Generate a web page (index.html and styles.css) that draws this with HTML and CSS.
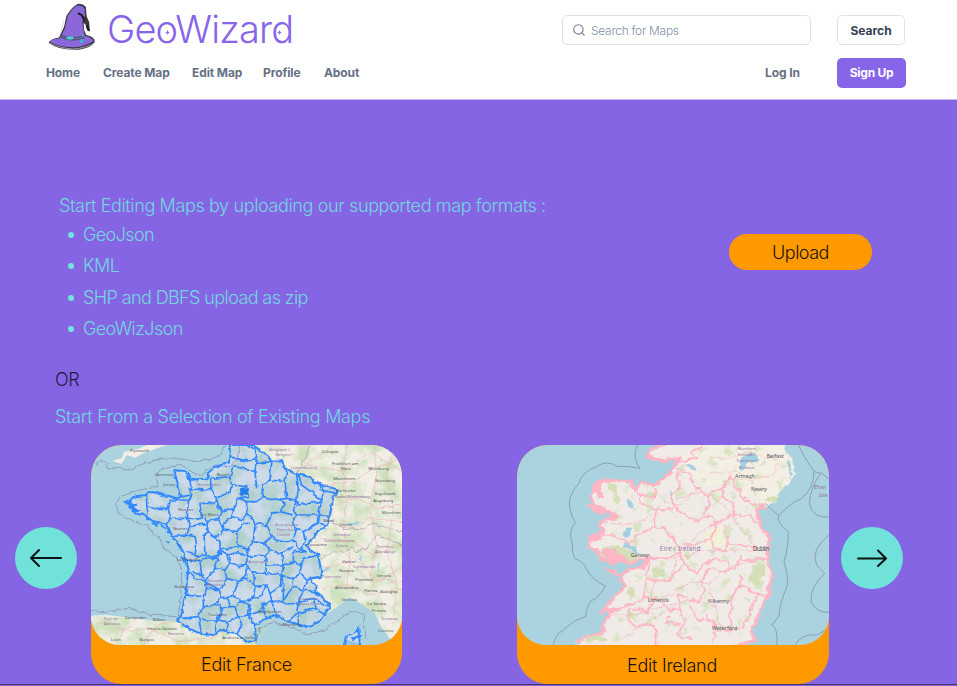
FILE: index.html
```html
<!DOCTYPE html>
<html lang="en">
<head>
<meta charset="utf-8">
<title>GeoWizard</title>
<link rel="stylesheet" href="styles.css">
</head>
<body>
<header class="header">
  <div class="top-row">
    <a class="brand">
      <svg class="hat" viewBox="0 0 150 145">
        <path d="M5 121Q4 110 36 104L51 72 58 40Q76 9 92 3Q106 0 117 12L119 40 127 58 129 86 121 82 116 66 110 60 112 83 118 97Q143 102 144 117Q133 136 95 141Q35 144 5 121Z" fill="#3a3642"/>
        <path d="M8 117Q12 108 38 107L53 78 62 40Q77 13 91 8Q104 5 113 16L114 38 106 57 110 82 113 99Q137 105 140 115Q120 130 84 134Q36 134 8 117Z" fill="#8b67d9"/>
        <path d="M55 41Q73 13 89 5M51 53L37 98M9 122Q40 137 79 139Q119 136 145 120" fill="none" stroke="#cfcdd6" stroke-width="2"/>
        <path d="M41 98Q74 111 111 99M41 103Q76 118 112 105" fill="none" stroke="#4d5671" stroke-width="4"/>
        <path d="M93 31L104 36 113 53M119 68L126 84" fill="none" stroke="#1d1922" stroke-width="6"/>
        <ellipse cx="69" cy="106" rx="11" ry="4.5" fill="#4adbd8"/><circle cx="104" cy="115" r="6" fill="#35bfc8"/><circle cx="107" cy="98" r="3.5" fill="#35bfc8"/>
      </svg>
      <span class="wordmark">GeoWizard</span>
      <svg class="spark spark-o" viewBox="0 0 6 6"><path d="M3 0L4 2 6 3 4 4 3 6 2 4 0 3 2 2Z"/></svg>
      <svg class="spark spark-d" viewBox="0 0 6 6"><path d="M3 0L4 2 6 3 4 4 3 6 2 4 0 3 2 2Z"/></svg>
    </a>
    <div class="search-field">
      <svg class="search-icon" viewBox="0 0 12 12"><circle cx="5.4" cy="5.4" r="4.7"/><path d="M8.8 8.8L11.5 11.5"/></svg>
      <span class="placeholder">Search for Maps</span>
    </div>
    <button class="button search-button">Search</button>
  </div>
  <nav class="nav-row">
    <a class="n-home">Home</a><a class="n-create">Create Map</a><a class="n-edit">Edit Map</a><a class="n-profile">Profile</a><a class="n-about">About</a>
    <a class="login">Log In</a>
    <button class="button signup">Sign Up</button>
  </nav>
</header>
<main class="main">
  <section class="upload-section">
    <div class="formats">
      <p class="intro">Start Editing Maps by uploading our supported map formats :</p>
      <ul>
        <li>GeoJson</li>
        <li>KML</li>
        <li>SHP and DBFS upload as zip</li>
        <li>GeoWizJson</li>
      </ul>
    </div>
    <button class="upload">Upload</button>
  </section>
  <p class="or">OR</p>
  <p class="existing">Start From a Selection of Existing Maps</p>
  <section class="carousel">
    <button class="arrow" aria-label="Previous"><svg viewBox="0 0 34 20"><path d="M32 10H3M10 2L2 10L10 18"/></svg></button>
    <article class="card france">
      <svg class="map" viewBox="33 30 933 600" preserveAspectRatio="none">
        <defs>
          <filter id="rough" x="-5%" y="-5%" width="110%" height="110%"><feTurbulence type="fractalNoise" baseFrequency=".055" numOctaves="2" seed="4"/><feDisplacementMap in="SourceGraphic" scale="13" xChannelSelector="R" yChannelSelector="G"/></filter>
          <filter id="terrain" x="0" y="0" width="100%" height="100%" color-interpolation-filters="sRGB"><feTurbulence type="fractalNoise" baseFrequency=".02" numOctaves="4" seed="8"/><feColorMatrix values="0 0 0 0 .78  0 0 0 0 .87  0 0 0 0 .71  3 0 0 0 -1.15"/><feComposite in2="SourceGraphic" operator="in"/></filter>
        </defs>
        <path class="sea" d="M33 30H966V630H33Z"/>
        <path class="land" d="M450 30H966V555L960 625L928 610L900 570L885 535L850 510L810 487L765 520L735 540L720 562L680 575L640 565L585 542L550 552L525 575L528 630H70L33 590V542L80 540L150 548L230 558L290 557L303 545L318 470L325 400L318 375L310 350L275 300L262 270L225 262L190 240L165 235L150 212L135 200L170 183L198 180L205 172L245 180L270 183L290 190L303 185L292 140L282 106L318 108L330 135L385 130L383 115L400 100L447 80Z"/>
        <path class="land" d="M97 78L125 70L133 50L180 40L200 30H260L235 38L205 50L190 55L165 68L140 60L125 86ZM800 615L805 600L830 588L838 625Z"/>
        <path class="relief" filter="url(#terrain)" d="M450 30H966V555L928 610L885 535L810 487L735 540L680 575L585 542L528 630H70L33 590V542L290 557L318 470L325 400L262 270L190 240L135 200L205 172L303 185L282 106L330 135L385 130L447 80Z"/>
        <g filter="url(#rough)">
          <path class="road" d="M33 570L90 560 140 590 210 580 300 620 420 605M100 630L130 590 170 550M190 630L230 570 280 560M650 110L720 60 760 30M610 40L690 90 790 110 870 50 966 110M730 150L820 140 880 100 966 70M760 210L830 190 890 220 966 210M755 265L820 280 870 250 966 260M720 310L820 320 880 360 966 330M725 400L810 380 860 430 966 440M730 460L800 450 870 480 966 460M800 30L790 120 800 200 790 280 810 360 800 460M880 30L890 120 870 220 890 330 870 420 920 540M940 30L920 120 940 230 920 350 950 440 940 570M760 330L800 360 850 390 890 440 966 400"/>
          <path class="country" d="M690 30L680 60 660 100 650 118M765 160L745 250 790 280 850 285 875 265 966 290M725 370L760 350 790 355 815 335 830 350 860 340 890 300 966 330"/>
          <path class="lake" d="M722 408L745 395 750 402 730 412ZM800 265L840 258 838 267 810 272ZM892 390L898 378 900 410 894 412ZM836 372L842 360 842 378ZM730 290L745 275 742 288Z"/>
          <path class="maritime" d="M480 30L470 75 450 95 405 90 360 118 335 115 320 95 290 90 240 105 230 130 235 155 180 165 120 185 110 205 115 235 165 260 205 270 220 298 240 310 250 340 290 365 305 405 303 470 295 540M33 527L80 530 145 520 210 540 292 545M50 95C50 75 75 70 85 100C110 90 150 120 170 95C200 80 250 65 290 70L350 80 420 65 435 30M527 625L540 580 580 560 640 580 680 600 730 585 770 560 810 530 855 535 850 570 860 610"/>
          <path class="departments" d="M450 30L447 80 400 100 383 115 385 130 330 135 318 108 282 106 292 140 303 185 290 190 270 183 245 180 225 172 205 172 198 180 170 183 135 200 150 212 165 235 190 240 225 262 262 270 275 300 310 350 318 375 325 400 318 470 303 545 290 557 325 580 365 597 405 600 420 585 470 595 500 622 528 615 525 570 560 550 585 540 625 560 680 575 720 560 735 540 750 510 730 490 705 470 712 455 690 430 725 425 722 400 715 360 690 345 680 330 700 310 712 290 740 270 750 240 760 190 773 163 740 155 700 140 690 125 650 118 610 95 607 75 580 80 550 55 520 30ZM795 630L800 605 830 588 835 578 840 630M815 615L845 600"/>
          <path class="borders" d="M200 180V210L220 220H265L272 195M272 195H330L335 180 303 185M330 135L335 180M325 162L395 165M395 130V165L410 190 405 205M335 180L325 200 322 250M322 250L365 250 360 205 405 205M200 210L205 240 M265 220L270 250 262 270M270 250L322 250 330 275 320 300 280 305M320 300L345 305 350 330 345 360 318 350M330 275L380 265 375 250M380 265L385 290 372 300 375 360 345 365M385 290L400 305 425 300 430 285 415 250 380 260M375 360L410 367 420 345V320L400 305M318 375L360 380 365 420 335 410M360 380L375 370H415L405 400 380 435 365 420M325 410L345 430 375 435 380 460 370 485 315 480M380 460L420 465V490L400 510 370 515 370 485M305 550L355 545 370 515M355 545L365 597M365 555L410 555 425 535 420 510 400 510M410 555L405 600M395 130L450 125 458 100M447 65L510 80 530 65M458 95L515 105 525 110M450 125L455 150 500 155 505 185 470 190 462 220 430 230 415 215 410 190 450 170 455 150M430 230L415 250M462 220L455 245 430 265 430 285M455 245L490 255 500 235M430 285L470 290 475 335 420 345M470 290L490 265 510 265M475 335L510 345M410 367L425 350 445 360 450 385 435 405 405 400M445 360L475 350 500 365 502 390 475 395 450 385M435 405L440 430 420 465 375 440M440 430L475 440 500 420 502 390M475 440L460 480 440 490 420 490M440 490L450 515 420 525M460 480L485 500 465 515 450 515M465 515L475 545 440 560 410 555M475 545L505 540 525 570M440 560L445 595M475 545L485 570 470 595M485 500L510 510 505 540M520 30L530 60 525 110 530 160M530 85L575 80 570 135 545 150 550 185 530 200M570 135L615 140 620 105 607 80M615 140L620 190 650 195 655 160 650 118M655 118L665 150 700 175 725 200 730 165 720 145M720 165L770 175M620 190L600 195 575 190 550 185M650 195L655 210 720 200 M725 200L715 240 650 240 640 225 650 195M715 240L745 245M715 240L712 265 670 290 650 280 640 260 650 240M712 265L745 270M670 290L675 315 665 345M650 280L640 315 655 340 680 350M575 235L600 230 615 205 600 190M530 200L500 200V235L525 265 560 270 575 235M525 265L520 320 555 325 575 300 560 270M600 230L640 240M575 300L590 320 640 315M555 325L570 345 605 355 640 335M520 320L500 345 500 365 555 360 570 345M500 395L520 410 555 415 560 390 555 360M560 390L610 390 605 355M610 390L640 380 640 350 680 350M640 380L665 390 670 370 715 360M665 390L660 415 680 435 725 425M610 390L605 420 640 430 660 415M555 415L605 420 600 455 570 475 560 450 525 455 520 410M525 455L500 430 475 440M525 455L520 490 485 500M560 450L545 480 520 490M570 475L575 500 545 510 540 530 505 540M600 455L610 420 610 500 575 500M640 430L640 455 620 480 610 500M640 455L670 465 705 470M670 465L655 500 625 510 610 500M575 500L590 540M655 500L650 535 625 560M655 500L700 490 705 520 650 535M705 520L735 540M655 535L655 565 680 575M704 490L730 510 750 510M545 510L560 550M680 435L670 465M480 190L500 200M500 30L525 50"/>
          <path class="islands" d="M140 205l14-8-3 12 20-3-14 10 18 10-18 2zM195 248l12 7M215 264l18 7M240 272l20 10M263 290l8 3M260 320l8 3M302 365l8 8 6 18"/>
          <path class="paris" d="M482 162L498 159 502 177 484 180Z"/>
        </g>
        <g class="labels">
          <text x="150" y="52">Plymouth</text><text x="224" y="122">Guernsey</text><text x="250" y="154">Jersey</text><text x="410" y="123">Rouen</text><text x="295" y="229">Rennes</text><text x="365" y="244">Le Mans</text><text x="279" y="284">Nantes</text><text x="290" y="377">La Rochelle</text><text x="283" y="460">Bordeaux</text><text x="385" y="544">Toulouse</text><text x="135" y="553">Santander</text><text x="218" y="558">Bilbao</text><text x="202" y="584">Vitoria-Gasteiz</text><text x="93" y="618">León</text><text x="178" y="618">Burgos</text><text x="427" y="613">Andorra la Vella</text><text x="725" y="54">Cologne</text><text x="756" y="90">Frankfurt am</text><text x="782" y="106">Main</text><text x="865" y="104">Würzburg</text><text x="760" y="134">Mannheim</text><text x="885" y="140">Nürnberg</text><text x="768" y="170">Karlsruhe</text><text x="884" y="181">Ingolstadt</text><text x="880" y="202">Augsburg</text><text x="905" y="237">München</text><text x="778" y="272">Zürich</text><text x="730" y="260">Basel</text><text x="682" y="334">Lausanne</text><text x="787" y="383">Varese</text><text x="777" y="410">Novara</text><text x="825" y="437">Piacenza</text><text x="890" y="425">Verona</text><text x="765" y="463">Alessandria</text><text x="853" y="470">Parma</text><text x="901" y="473">Bologna</text><text x="785" y="499">Genova</text><text x="862" y="510">La Spezia</text><text x="875" y="531">Firenze</text><text x="895" y="592">Livorno</text><text x="608" y="573">Marseille</text><text x="535" y="534">Montpellier</text>
          <g class="region"><text x="567" y="48">Belgique /</text><text x="587" y="64">Belgien</text><text x="632" y="103">Luxembourg</text><text x="350" y="152">Normandie</text><text x="760" y="302">Schweiz/</text><text x="732" y="320">Suisse/Svizzera</text><text x="768" y="337">Svizra</text><text x="585" y="274">Bourgogne-</text><text x="590" y="288">Franche</text><text x="590" y="302">Comté</text><text x="382" y="440">Nouvelle-</text><text x="380" y="454">Aquitaine</text><text x="655" y="495">Provence-</text><text x="655" y="510">Alpes-Côte</text><text x="505" y="384">Auvergne</text><text x="71" y="554">País de</text><text x="72" y="570">Asturias</text><text x="263" y="600">Navarra</text><text x="765" y="190" textLength="105">Baden-Württemberg</text><text x="890" y="338">Trentino</text><text x="885" y="354">Alto Adige</text><text x="820" y="400">Lombardia</text><text x="725" y="430">Piemonte</text><text x="903" y="554">Toscana</text></g>
        </g>
      </svg>
      <p>Edit France</p>
    </article>
    <article class="card ireland">
      <svg class="map" viewBox="21 30 936 600" preserveAspectRatio="none">
        <defs>
          <filter id="coast" x="-5%" y="-5%" width="110%" height="110%"><feTurbulence type="fractalNoise" baseFrequency=".045" numOctaves="3" seed="12"/><feDisplacementMap in="SourceGraphic" scale="20" xChannelSelector="R" yChannelSelector="G"/></filter>
          <filter id="meadow" x="0" y="0" width="100%" height="100%" color-interpolation-filters="sRGB"><feTurbulence type="fractalNoise" baseFrequency=".03" numOctaves="4" seed="21"/><feColorMatrix values="0 0 0 0 .84  0 0 0 0 .89  0 0 0 0 .75  7 0 0 0 -4.1"/><feComposite in2="SourceGraphic" operator="in"/></filter>
        </defs>
        <path class="sea" d="M21 30H957V630H21Z"/>
        <g filter="url(#coast)">
          <path class="irish-land" d="M480 20L420 45 415 65 450 78 510 70 480 110 440 150 390 145 375 165 365 140 290 135 255 145 245 180 255 210 285 225 315 240 290 250 270 265 280 290 245 300 235 335 270 360 300 380 370 380 410 370 400 400 355 400 335 430 345 455 305 495 275 530 315 520 280 560 280 590 200 620 200 640H665L740 615 720 590 745 540 775 480 780 450 785 410 770 370 780 310 755 280 745 250 740 225 770 210 800 200 810 165 830 150 855 120 850 70 825 55 830 20Z"/>
          <path class="northern" d="M590 20H825L822 60 848 75 850 120 825 150 810 165 800 195 765 210 735 180 700 190 675 150 660 120 630 155 580 150 545 120 515 60Z"/>
          <path class="relief" filter="url(#meadow)" d="M500 80L450 150 290 145 290 220 330 240 280 300 380 350 420 380 360 430 310 540 310 620H680L740 520 770 420 750 320 740 220 800 190 840 90 800 30H600Z"/>
          <path class="green" d="M290 150l12-8 20 12-5 18 12 18-5 20-15-12 3-20zM270 345l35-15 55 15 20 30-45 5-35-15-15 10zM405 180l20-15 12 15-10 15zM425 400l38 5 5 25-25-8-15 10zM730 390l35-5-2 35-20 28-30-4zM230 600l50 0 20 15-70 5zM360 455l20 25-20 10-10-20zM355 525l20 10-5 20-15-10zM520 355l30 8-12 15zM760 195l30-12 20 5-15 15z"/>
          <path class="bog" d="M585 290l45-20 5 30 15 15-15 25-50-10z"/>
          <path class="lake" d="M350 190l12 7 10 22-15-5zM350 280l13-5-2 20-17 15-6-5zM340 325l38 10 8 20-12 2-12-15-23-5zM690 75l23-18 25-3 10 20-40 12-10 22-8-3zM525 90l20-5 15 25-15-10zM480 160l7 20-10 10zM830 75l12 10 3 35-10 15 2-30z"/>
          <path class="irish-road" d="M275 260L340 270 410 250 460 200 510 210 570 160M410 365L480 370 520 365 570 345 635 350 740 345M415 510L480 480 510 460 555 440 600 445 650 400 740 370M740 340L690 280 650 220 590 170 500 190M590 440L620 520 630 570 665 600M280 540L380 540 440 520 560 490 620 520M420 500L430 440 480 430 510 350 620 250M340 610L400 570 450 540 500 510"/>
          <path class="north-road" d="M600 60L650 75 700 50 800 75M650 130L720 135 790 120 805 80M735 180L720 130 680 110 600 115"/>
          <path class="counties" d="M255 155L275 145M365 150L390 175 390 205 430 220 440 240 430 275 385 300 360 330 310 300 270 300M430 275L465 280 490 310 510 350 480 370 410 370M415 370L410 430 400 490 335 520 280 530M430 220L460 225 490 220 485 180 510 160 500 110M390 175L430 195 440 160M485 200L510 230 560 260 600 240 620 270 605 310 550 330 520 330M500 100L545 120 550 150 590 180 600 210 580 240M590 180L640 160 660 120 675 150 705 195 740 210M630 160L640 185 670 205 670 240 600 275M670 240L715 240 755 280M640 270L655 325 700 330 740 340M605 310L610 340 640 350 655 325M510 350L520 390 560 410 580 390 620 370 650 380 660 405 630 410 600 400 570 440 590 470 560 500 500 480 510 520 480 530 440 490 400 490M410 430L460 440 490 420 520 390M660 405L675 400 690 370 690 360M690 370L730 380 770 370M690 420L690 450 720 465 740 480 775 480M740 480L720 540 700 575 665 590 625 590 610 560 560 550 540 510M665 590L660 550 665 490 690 450M355 520L355 550 370 575 420 565 440 590 440 630M355 520L410 530 440 490M510 520L525 560 500 600 550 610M480 540L470 560 510 570M590 540L620 590 610 620M510 80L560 70 545 50 580 30"/>
          <path class="pink-coast" d="M480 20L420 45 415 65 450 78 510 70 480 110 440 150 390 145 375 165 365 140 290 135 255 145 245 180 255 210 285 225 315 240 290 250 270 265 280 290 245 300 235 335 270 360 300 380 370 380 410 370 400 400 355 400 335 430 345 455 305 495 275 530 315 520 280 560 280 590 200 620M765 210L740 225 745 250 755 280 780 310 770 370 785 410 775 480 745 540 720 590 740 615 665 635"/>
          <path class="pink-fill" d="M250 150l22-5 4 38-15 10 5-25-15 5zM230 210l35 0 23 20-5 15-25-18zM225 305l40-10 10 20-30 3-5-8zM235 335l35 13 10 25 45 10-45-2-20-25zM280 400l28 5 22 15-20-3zM748 205l25 12-15 5zM278 350l35-10 5 12 35 15-10 15-35 0-20-18zM300 240l25-4 0 15-22 6z"/>
        </g>
        <path class="sea-line" d="M382 30Q365 70 390 100Q360 93 322 94Q290 75 265 92Q215 110 207 145Q170 185 180 220Q183 245 196 262Q173 290 187 325Q186 360 197 372Q220 380 228 400Q245 435 286 453Q270 485 240 500Q225 530 228 545Q195 552 160 585Q135 600 130 630M765 205L806 242Q845 200 873 192Q912 160 912 110L880 60 865 30M806 242Q800 265 835 290Q835 340 822 380Q835 425 832 450Q805 520 808 540Q795 560 786 570Q805 580 800 630M957 132L935 115 912 110M933 113Q900 160 898 205Q905 250 957 246M957 300Q900 345 920 390L944 415Q900 455 903 500Q920 535 957 532M855 630Q875 595 920 600L957 580"/>
        <g class="labels ireland-labels">
          <g class="region"><g class="stacked"><text x="683" y="44">Northern</text><text x="684" y="63">Ireland /</text><text x="678" y="82">Tuaisceart</text><text x="687" y="101">Éireann</text></g><text class="large" x="449" y="347" textLength="122">Éire / Ireland</text><text x="912" y="163">Ellan</text><text x="926" y="186">Isle</text></g>
          <text x="770" y="70">Belfast</text><text x="675" y="128">Armagh</text><text x="723" y="167">Newry</text><text x="362" y="367">Galway</text><text class="large" x="728" y="347" textLength="50">Dublin</text><text x="413" y="500">Limerick</text><text x="594" y="503">Kilkenny</text><text x="606" y="586">Waterford</text>
        </g>
      </svg>
      <p class="lower">Edit Ireland</p>
    </article>
    <button class="arrow" aria-label="Next"><svg viewBox="0 0 34 20"><path d="M3 10.5H31M23 2.5L31 10.5L23 18"/></svg></button>
  </section>
</main>
</body>
</html>
```
FILE: styles.css
```css
* { box-sizing: border-box; }
body { margin: 0; width: 957px; height: 686px; overflow: hidden; font-family: Inter, "Liberation Sans", sans-serif; background: #8665e4; }
p, ul { margin: 0; padding: 0; }
button { border: 0; padding: 0; font-family: inherit; }
.header { height: 100px; background: #fff; border-bottom: 1px solid #c5b7f0; padding: 0 51px 0 46px; }
.top-row { display: flex; height: 57px; }
.brand { position: relative; display: flex; width: 516px; }
.hat { width: 50px; height: 48px; margin: 3px 0 0 1px; }
.wordmark { margin-left: 10px; margin-top: 5px; color: #8764e8; font-size: 38px; font-weight: 300; line-height: 48px; letter-spacing: -.85px; white-space: nowrap; }
.spark { position: absolute; width: 5px; height: 5px; top: 30px; fill: #9370ef; }
.spark-o { left: 119px; }
.spark-d { left: 231px; }
.search-field { display: flex; align-items: center; width: 249px; height: 30px; margin-top: 15px; padding-left: 10px; border: 1px solid #dfe3e9; border-radius: 5px; }
.search-icon { width: 12px; height: 12px; fill: none; stroke: #758196; stroke-width: 1.1; }
.placeholder { margin-left: 6px; color: #8290a5; font-size: 12px; font-weight: 300; letter-spacing: -.28px; }
.button { display: flex; align-items: center; justify-content: center; width: 68px; height: 30px; border-radius: 5px; font-size: 12px; font-weight: 700; }
.search-button { margin: 15px 0 0 26px; background: #fff; border: 1px solid #dfe3e9; color: #344054; }
.nav-row { display: flex; align-items: center; height: 31px; color: #667085; font-size: 12px; font-weight: 700; white-space: nowrap; }
.n-home { width: 57px; }
.n-create { width: 89px; }
.n-edit { width: 71px; }
.n-profile { width: 61px; }
.n-about { width: 441px; }
.login { width: 72px; }
.nav-row > a { letter-spacing: -.1px; }
.signup { flex: none; width: 69px; background: #8665e8; color: #fff; letter-spacing: -.25px; }
.main { display: flow-root; height: 585px; border-bottom: 1px solid #44385f; }
.upload-section { display: flex; height: 258px; padding: 94px 0 0 59px; }
.formats { width: 670px; color: #71d8e0; font-size: 18px; font-weight: 300; line-height: 24px; }
.intro { letter-spacing: -.37px; white-space: nowrap; }
ul { list-style: none; margin-top: 1px; }
li { display: flex; align-items: center; height: 31.5px; padding-left: 9px; letter-spacing: -.6px; }
li::before { content: ""; width: 6px; height: 6px; margin-right: 9px; border-radius: 50%; background: #70e5dd; }
.upload { width: 143px; height: 36px; margin-top: 40px; border-radius: 18px; background: #ff9900; color: #171309; font-size: 18px; font-weight: 300; letter-spacing: -.5px; }
.or { height: 44px; padding-left: 55px; color: #24183f; font-size: 18px; font-weight: 300; line-height: 44px; letter-spacing: -.4px; }
.existing { height: 43px; padding-left: 55px; color: #71d8e0; font-size: 18px; font-weight: 300; line-height: 30px; letter-spacing: -.3px; }
.carousel { display: flex; height: 239px; padding-left: 15px; }
.arrow { display: flex; align-items: center; justify-content: center; width: 62px; height: 62px; margin-top: 82px; border-radius: 50%; background: #70e2da; }
.arrow svg { width: 34px; height: 20px; fill: none; stroke: #0a1514; stroke-width: 2; stroke-linecap: round; stroke-linejoin: round; }
.card { height: 239px; overflow: hidden; border-radius: 31px; background: #ff9900; }
.france { width: 311px; margin-left: 14px; }
.ireland { width: 312px; margin: 0 12px 0 115px; }
.card p { height: 39px; color: #171309; font-size: 18px; font-weight: 300; line-height: 39px; letter-spacing: -.25px; text-align: center; }
.card .lower { line-height: 41px; padding-right: 2px; }
.map { display: block; width: 100%; height: 200px; border-radius: 29px; }
.sea { fill: #aad3df; }
.land { fill: #f1efe5; }
.relief { opacity: .85; }
.road { fill: none; stroke: #edb6ba; stroke-width: 2; }
.country { fill: none; stroke: #aa94ad; stroke-width: 2; }
.maritime, .sea-line { fill: none; stroke: #8a91b2; stroke-width: 2.5; }
.departments { fill: #3388ff; fill-opacity: .2; stroke: #3388ff; stroke-width: 6; }
.borders { fill: none; stroke: #3388ff; stroke-width: 5; stroke-linejoin: round; }
.islands { fill: #3388ff; stroke: #3388ff; stroke-width: 5; }
.paris { fill: #287de9; stroke: #287de9; stroke-width: 4; }
.labels { fill: #55545a; font-family: "Noto Sans", sans-serif; font-size: 13px; }
.region { fill: #9275a3; }
.ireland-labels { font-size: 16px; }
.stacked { font-size: 13px; }
.large { font-size: 19px; }
.irish-land { fill: #f1ebe7; }
.northern { fill: #f3efe5; }
.green { fill: #d5dfb7; }
.bog { fill: #f3f0d8; }
.lake { fill: #a3cfe0; }
.irish-road { fill: none; stroke: #efafba; stroke-width: 2; }
.north-road { fill: none; stroke: #f4c6b4; stroke-width: 2.5; }
.counties { fill: none; stroke: #ffb5c3; stroke-width: 5; }
.pink-coast { fill: none; stroke: #ffb5c3; stroke-width: 9; }
.pink-fill { fill: #ffb5c3; stroke: #ffb5c3; stroke-width: 3; }
```
